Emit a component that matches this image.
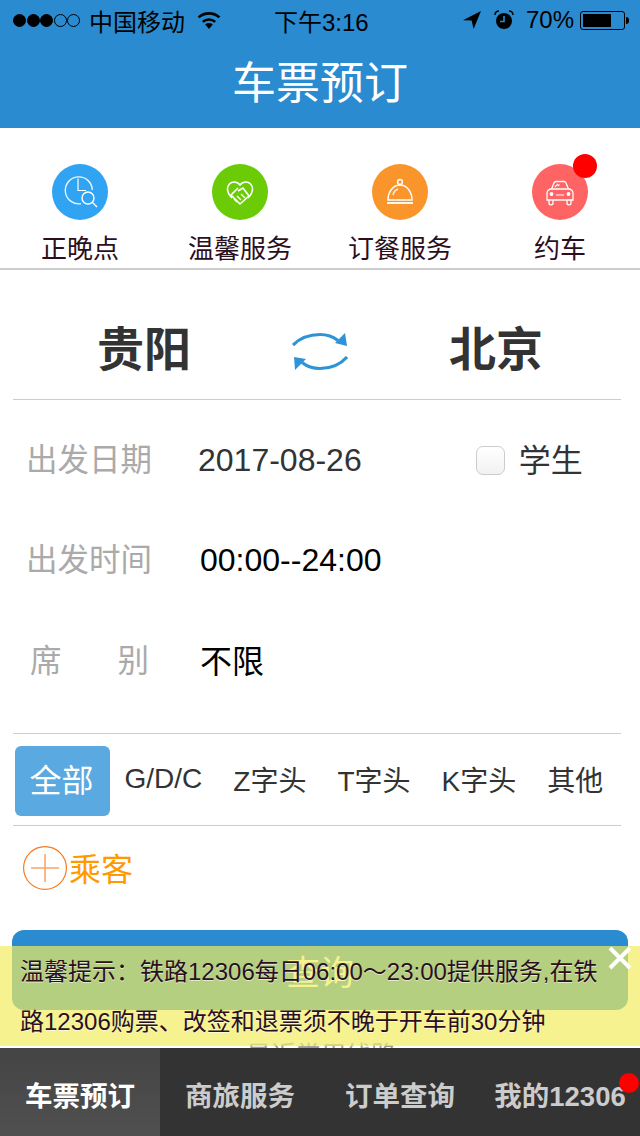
<div class="page">
  <header class="head">
    <div class="status">
      <div class="signal">
        <i class="dot on"></i><i class="dot on"></i><i class="dot on"></i><i class="dot"></i><i class="dot"></i>
      </div>
      <span class="carrier">中国移动</span>
      <svg class="wifi" viewBox="0 0 24 18" width="24" height="18">
        <path d="M12 18 8.2 13.6a5.6 5.6 0 0 1 7.6 0Z" fill="#000"/>
        <path d="M5.8 10.9a9.2 9.2 0 0 1 12.4 0" fill="none" stroke="#000" stroke-width="2.6"/>
        <path d="M1.6 6.4a15.4 15.4 0 0 1 20.8 0" fill="none" stroke="#000" stroke-width="2.6"/>
      </svg>
      <span class="time">下午3:16</span>
      <svg class="loc" viewBox="0 0 18 18" width="18" height="18">
        <path d="M18 0 0 9.2l8.6.4L10.6 18Z" fill="#000"/>
      </svg>
      <svg class="alarm" viewBox="0 0 20 20" width="20" height="20">
        <circle cx="10" cy="11" r="8" fill="#000"/>
        <path d="M10 6v5.500H6" fill="none" stroke="#2a8bd0" stroke-width="1.600"/>
        <path d="M1 5a4 4 0 0 1 4-4M19 5a4 4 0 0 0-4-4" fill="none" stroke="#000" stroke-width="1.600"/>
      </svg>
      <span class="pct">70%</span>
      <div class="battery"><div class="level"></div></div>
      <div class="nub"></div>
    </div>
    <h1>车票预订</h1>
  </header>

  <nav class="quick">
    <div class="q">
      <div class="ic blue">
        <svg viewBox="0 0 56 56" width="56" height="56" fill="none" stroke="#fff" stroke-width="1.400">
          <path d="M29 39.700A13.500 13.500 0 1 1 40.300 26" opacity=".9"/>
          <path d="M26 14.500V26.500h8" stroke-width="1.200"/>
          <circle cx="36" cy="34" r="6"/>
          <path d="M40.500 38.500l4.500 4.500" stroke-width="1.400"/>
        </svg>
      </div>
      <span>正晚点</span>
    </div>
    <div class="q">
      <div class="ic green">
        <svg viewBox="0 0 56 56" width="56" height="56" fill="none" stroke="#fff" stroke-width="1.600">
          <path d="M20 34c-3-3-4.500-5-4.500-9 0-4 3-7 6.500-7 2.500 0 4.500 1 6 3 1.500-2 3.500-3 6-3 3.500 0 6.500 3 6.500 7 0 4-1.500 6-4.500 9"/>
          <path d="M26 24l-7 7 9 9 9-8-6-8-5 3"/>
          <path d="M22 35l3 3M25 32l4 4M29 30l4 4" stroke-width="1.400"/>
        </svg>
      </div>
      <span>温馨服务</span>
    </div>
    <div class="q">
      <div class="ic orange">
        <svg viewBox="0 0 56 56" width="56" height="56" fill="none" stroke="#fff" stroke-width="1.500">
          <circle cx="28" cy="18" r="2.400"/>
          <path d="M16 36c0-8 5-15 12-15s12 7 12 15Z"/>
          <path d="M21 31c.5-2.500 2.500-5 5-6" opacity=".8"/>
          <path d="M15 39h26" stroke-width="1.800"/>
        </svg>
      </div>
      <span>订餐服务</span>
    </div>
    <div class="q">
      <div class="ic red">
        <svg viewBox="0 0 56 56" width="56" height="56" fill="none" stroke="#fff" stroke-width="1.300">
          <path d="M19.500 25l2.500-6c.4-1 1-1.500 2-1.500h8c1 0 1.600.5 2 1.500l2.500 6"/>
          <path d="M15 29c0-2 2-4 4.500-4h17c2.500 0 4.500 2 4.500 4v7H15Z"/>
          <path d="M17 36v3c0 2.500 4 2.500 4 0v-3M35 36v3c0 2.500 4 2.500 4 0v-3"/>
          <path d="M24 31h8M23 23l3-3M26 22l1.500-1.500" stroke-width="1.100"/>
          <circle cx="19.500" cy="30" r="1.300" fill="#fff"/>
          <circle cx="36.500" cy="30" r="1.300" fill="#fff"/>
        </svg>
      </div>
      <i class="badge"></i>
      <span>约车</span>
    </div>
  </nav>

  <main class="form">
    <div class="route">
      <div class="city">贵阳</div>
      <div class="swap">
        <svg viewBox="0 0 56 40" width="56" height="40" fill="none" stroke="#2f93d8" stroke-width="3.200">
          <path d="M1 13C8 6 18 2.500 28 2.500c7 0 13 2 18 6"/>
          <path d="M55 25c-7 8-17 11.500-27 11.500-7 0-13-2-18-6"/>
          <path d="M53 1 55 14 43 11Z" fill="#2f93d8" stroke="none"/>
          <path d="M2 25 3 38 14 27Z" fill="#2f93d8" stroke="none"/>
        </svg>
      </div>
      <div class="city">北京</div>
    </div>

    <div class="rows">
      <div class="row">
        <span class="label">出发日期</span>
        <span class="val date">2017-08-26</span>
        <span class="student"><i class="check"></i><span class="cjk">学生</span></span>
      </div>
      <div class="row">
        <span class="label">出发时间</span>
        <span class="val">00:00--24:00</span>
      </div>
      <div class="row">
        <span class="label split"><span>席</span><span>别</span></span>
        <span class="val cjk">不限</span>
      </div>
    </div>

    <div class="types">
      <span class="type active">全部</span>
      <span class="type">G/D/C</span>
      <span class="type">Z字头</span>
      <span class="type">T字头</span>
      <span class="type">K字头</span>
      <span class="type">其他</span>
    </div>

    <div class="passenger">
      <svg viewBox="0 0 44 44" width="44" height="44" fill="none">
        <circle cx="22" cy="22" r="21.400" stroke="#f57a22" stroke-width="1.200"/>
        <path d="M8 22h28M22 8v28" stroke="#f9a66a" stroke-width="1.600"/>
      </svg>
      <span>乘客</span>
    </div>

    <button class="search">查询</button>
    <div class="recent">最近常用线路</div>
  </main>

  <div class="notice">
    <p>温馨提示：铁路12306每日06:00～23:00提供服务,在铁路12306购票、改签和退票须不晚于开车前30分钟</p>
    <svg class="close" viewBox="0 0 24 24" width="24" height="24">
      <path d="M2 2l20 20M22 2 2 22" stroke="#fff" stroke-width="4"/>
    </svg>
  </div>

  <footer class="tabs">
    <div class="tab cur">车票预订</div>
    <div class="tab">商旅服务</div>
    <div class="tab">订单查询</div>
    <div class="tab">我的12306<i class="tbadge"></i></div>
  </footer>
</div>

<style>
  :global(body) {
    margin: 0;
    background: #fff;
  }
  .page {
    position: relative;
    width: 640px;
    height: 1136px;
    overflow: hidden;
    display: flex;
    flex-direction: column;
    font-family: "Liberation Sans", "Noto Sans CJK SC", sans-serif;
    background: #fff;
  }
  .head {
    height: 128px;
    flex: none;
    background: #2a8bd0;
  }
  .status {
    height: 40px;
    display: flex;
    align-items: center;
    color: #000;
    font-size: 24px;
    padding-left: 13px;
    box-sizing: border-box;
  }
  .signal {
    display: flex;
    gap: 0.5px;
    width: 67px;
    flex: none;
  }
  .dot {
    width: 13px;
    height: 13px;
    box-sizing: border-box;
    border: 1px solid #000;
    border-radius: 50%;
  }
  .dot.on {
    background: #000;
  }
  .carrier {
    margin-left: 9px;
    width: 96px;
    flex: none;
  }
  .wifi {
    margin-left: 12px;
    flex: none;
  }
  .time {
    margin-left: 53px;
    width: 99px;
    flex: none;
    white-space: nowrap;
  }
  .loc {
    margin-left: 90px;
    flex: none;
  }
  .alarm {
    margin-left: 13px;
    flex: none;
  }
  .pct {
    margin-left: 12px;
    width: 48px;
    flex: none;
  }
  .battery {
    margin-left: 6px;
    width: 45px;
    height: 19px;
    box-sizing: border-box;
    border: 1px solid #000;
    border-radius: 3px;
    padding: 2px;
    flex: none;
  }
  .level {
    width: 28px;
    height: 13px;
    background: #000;
  }
  .nub {
    width: 3px;
    height: 7px;
    margin-left: 1px;
    background: #000;
    border-radius: 0 3px 3px 0;
    flex: none;
  }
  h1 {
    margin: 0;
    text-align: center;
    color: #fff;
    font-size: 44px;
    font-weight: 400;
    line-height: 88px;
  }
  .quick {
    height: 142px;
    flex: none;
    box-sizing: border-box;
    display: grid;
    grid-template-columns: repeat(4, 160px);
    border-bottom: 2px solid #ccc;
  }
  .q {
    position: relative;
    display: flex;
    flex-direction: column;
    align-items: center;
    padding-top: 36px;
  }
  .q span {
    margin-top: 10px;
    font-size: 26px;
    line-height: 38px;
    color: #2b0f1d;
    white-space: nowrap;
  }
  .ic {
    width: 56px;
    height: 56px;
    border-radius: 50%;
  }
  .ic svg {
    display: block;
  }
  .blue { background: #30a3f3; }
  .green { background: #6bcb07; }
  .orange { background: #f9952b; }
  .red { background: #fe6464; }
  .badge {
    position: absolute;
    left: 93px;
    top: 26px;
    width: 24px;
    height: 24px;
    border-radius: 50%;
    background: #f00;
  }
  .form {
    flex: 1;
    min-height: 0;
    padding: 0 19px 0 13px;
  }
  .route {
    height: 130px;
    box-sizing: border-box;
    display: flex;
    justify-content: center;
    align-items: center;
    border-bottom: 1px solid #ccc;
    padding-top: 31px;
    padding-left: 6px;
  }
  .city {
    width: 176px;
    text-align: center;
    font-size: 47px;
    font-weight: 700;
    color: #333;
    line-height: 60px;
  }
  .swap {
    width: 176px;
    display: flex;
    justify-content: center;
    padding-top: 4px;
  }
  .swap svg {
    display: block;
  }
  .rows {
    padding-top: 10px;
    height: 334px;
    box-sizing: border-box;
    border-bottom: 1px solid #ccc;
  }
  .row {
    height: 100.500px;
    display: flex;
    align-items: center;
    padding-left: 13px;
    font-size: 32px;
  }
  .label {
    width: 126px;
    color: #aaa;
    font-size: 31.500px;
    flex: none;
    margin-top: -7px;
  }
  .split {
    display: flex;
    justify-content: space-between;
    box-sizing: border-box;
    padding: 0 3px 0 4px;
  }
  .val {
    margin-left: 48px;
    color: #000;
  }
  .date {
    margin-left: 46px;
    color: #333;
  }
  .cjk {
    margin-top: -4px;
  }
  .student {
    display: flex;
    align-items: center;
    margin-left: 114px;
    color: #333;
  }
  .check {
    width: 29px;
    height: 29px;
    box-sizing: border-box;
    border: 1px solid #ccc;
    border-radius: 7px;
    background: linear-gradient(#fff, #f2f2f2);
    margin-right: 14px;
  }
  .types {
    height: 92px;
    box-sizing: border-box;
    border-bottom: 1px solid #ccc;
    display: flex;
    align-items: center;
    padding-left: 2px;
    padding-top: 2px;
  }
  .type {
    flex: none;
    padding: 0 15.500px 4px;
    font-size: 28px;
    color: #333;
    white-space: nowrap;
  }
  .type:nth-child(2) {
    margin-left: -1px;
  }
  .active {
    width: 95px;
    height: 70px;
    box-sizing: border-box;
    padding: 0 2px 5px 0;
    display: flex;
    align-items: center;
    justify-content: center;
    background: #5aa9e0;
    color: #fff;
    font-size: 32px;
    border-radius: 6px;
  }
  .passenger {
    display: flex;
    align-items: center;
    height: 44px;
    margin-top: 20px;
    padding-left: 10px;
    color: #f90;
    font-size: 32px;
  }
  .passenger svg {
    flex: none;
    margin-right: 1px;
  }
  .passenger span {
    margin-top: -3px;
    margin-left: 1px;
  }
  .search {
    display: block;
    width: 616px;
    height: 80px;
    margin: 40px 0 0 -1px;
    padding: 0;
    border: 0;
    border-radius: 12px;
    background: #2a8bd0;
    color: #fff;
    font: inherit;
    font-size: 34px;
  }
  .recent {
    margin-top: 25px;
    text-align: center;
    font-size: 25px;
    color: #999;
    padding-left: 8px;
  }
  .notice {
    position: absolute;
    left: 0;
    top: 946px;
    width: 640px;
    height: 100px;
    background: rgba(241, 236, 96, 0.7);
  }
  .notice p {
    margin: 0;
    padding: 1px 20px 0 20px;
    font-size: 24px;
    line-height: 50px;
    color: #2b0f1d;
    text-shadow: 0 1px 0 rgba(255, 255, 255, 0.6);
  }
  .close {
    position: absolute;
    right: 8px;
    top: 0;
  }
  .tabs {
    flex: none;
    height: 88px;
    display: grid;
    grid-template-columns: repeat(4, 160px);
    background: #333;
    position: relative;
  }
  .tab {
    position: relative;
    display: flex;
    align-items: center;
    justify-content: center;
    color: #ccc;
    font-size: 27.500px;
    font-weight: 700;
    white-space: nowrap;
    padding-top: 3px;
    box-sizing: border-box;
  }
  .cur {
    color: #fff;
    background: linear-gradient(#444, #505050);
  }
  .tbadge {
    position: absolute;
    left: 139px;
    top: 25px;
    width: 20px;
    height: 20px;
    border-radius: 50%;
    background: #f00;
  }
</style>
